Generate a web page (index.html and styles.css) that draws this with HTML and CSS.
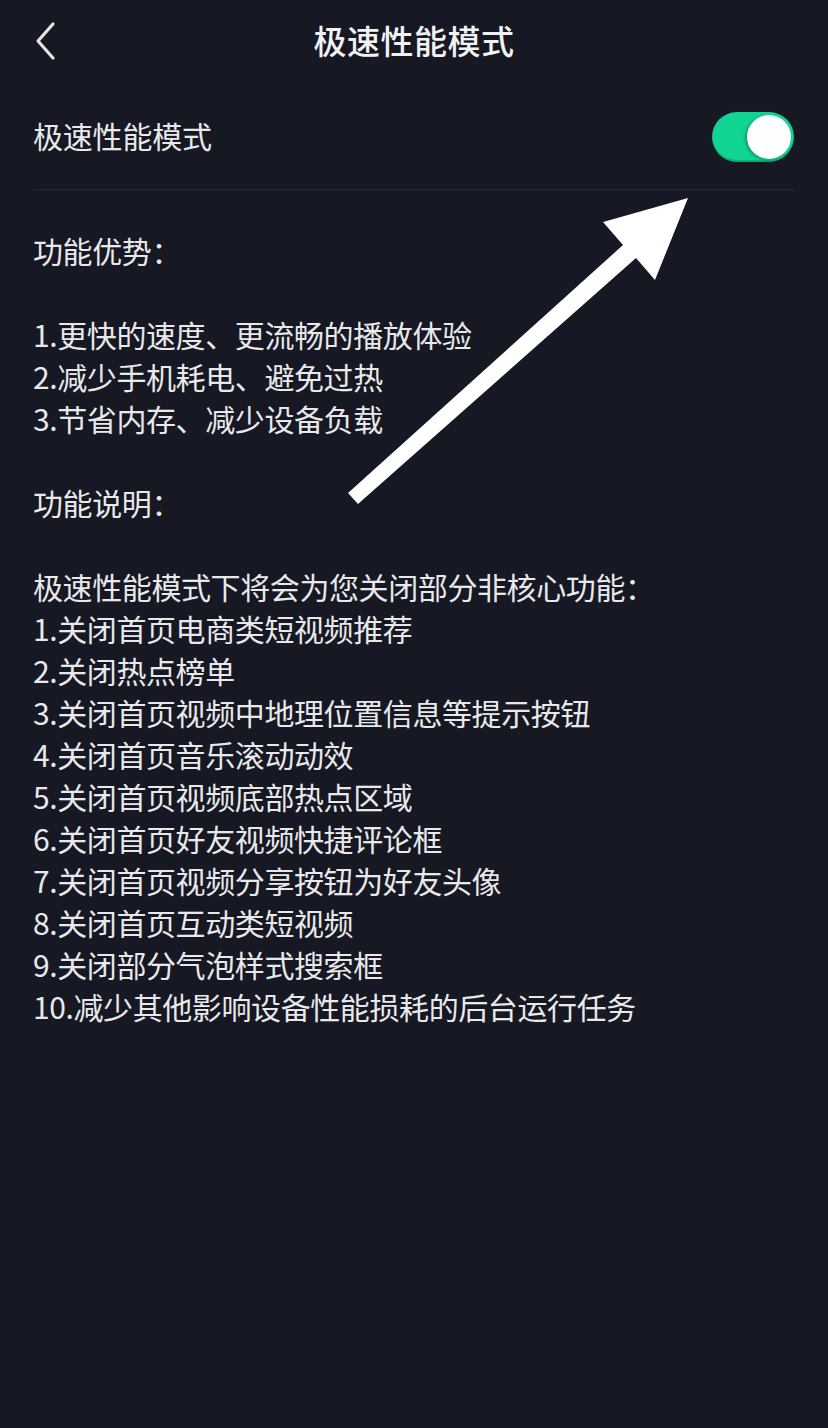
FILE: index.html
```html
<!DOCTYPE html>
<html lang="zh-CN">
<head>
<meta charset="utf-8">
<title>极速性能模式</title>
<link rel="stylesheet" href="styles.css">
</head>
<body>
<div class="page">
  <header class="nav">
    <svg class="back" width="24" height="40" viewBox="0 0 24 40">
      <path d="M19 3 L4 20 L19 37" fill="none" stroke="#e4e4e6" stroke-width="3.2" stroke-linecap="round" stroke-linejoin="round"/>
    </svg>
    <h1 class="title">极速性能模式</h1>
  </header>

  <div class="setting">
    <span class="setting-label">极速性能模式</span>
    <div class="toggle"><div class="knob"></div></div>
  </div>

  <div class="content">
    <p>功能优势：</p>
    <p class="blank">&nbsp;</p>
    <p>1.更快的速度、更流畅的播放体验</p>
    <p>2.减少手机耗电、避免过热</p>
    <p>3.节省内存、减少设备负载</p>
    <p class="blank">&nbsp;</p>
    <p>功能说明：</p>
    <p class="blank">&nbsp;</p>
    <p>极速性能模式下将会为您关闭部分非核心功能：</p>
    <p>1.关闭首页电商类短视频推荐</p>
    <p>2.关闭热点榜单</p>
    <p>3.关闭首页视频中地理位置信息等提示按钮</p>
    <p>4.关闭首页音乐滚动动效</p>
    <p>5.关闭首页视频底部热点区域</p>
    <p>6.关闭首页好友视频快捷评论框</p>
    <p>7.关闭首页视频分享按钮为好友头像</p>
    <p>8.关闭首页互动类短视频</p>
    <p>9.关闭部分气泡样式搜索框</p>
    <p>10.减少其他影响设备性能损耗的后台运行任务</p>
  </div>

  <svg class="arrow" width="828" height="1428" viewBox="0 0 828 1428">
    <polygon points="688,198 603,222 623,245 348,493 358,504 636,258 655,280" fill="#ffffff"/>
  </svg>
</div>
</body>
</html>
```

FILE: styles.css
```css
html, body {
  margin: 0;
  padding: 0;
  background: #161823;
}
body {
  font-family: "Noto Sans CJK SC", "Noto Sans", sans-serif;
  color: #e9e9eb;
}
.page {
  position: relative;
  width: 828px;
  height: 1428px;
  overflow: hidden;
}
.nav {
  position: relative;
  height: 84px;
  display: flex;
  align-items: center;
  justify-content: center;
}
.back {
  position: absolute;
  left: 34px;
  top: 21px;
}
.title {
  margin: 0 0 4px;
  font-size: 33px;
  font-weight: 500;
  color: #f2f2f4;
  letter-spacing: 0.5px;
}
.setting {
  margin: 0 33px;
  height: 105px;
  display: flex;
  align-items: center;
  justify-content: space-between;
  border-bottom: 1px solid #262834;
}
.setting-label {
  font-size: 30px;
  padding-bottom: 4px;
  letter-spacing: -0.2px;
}
.toggle {
  width: 82px;
  height: 50px;
  border-radius: 25px;
  background: #10d491;
  box-shadow: inset 0 -2px 0 rgba(0,0,0,0.18);
  display: flex;
  align-items: center;
  justify-content: flex-end;
  padding: 0 3px;
  box-sizing: border-box;
  margin-right: 1px;
}
.knob {
  width: 44px;
  height: 44px;
  border-radius: 50%;
  background: #ffffff;
  box-shadow: -2px 1px 3px rgba(0,0,0,0.25);
}
.content {
  padding: 39px 33px 0;
}
.content p {
  margin: 0;
  font-size: 30px;
  line-height: 42px;
  letter-spacing: -0.4px;
  white-space: nowrap;
}
.arrow {
  position: absolute;
  left: 0;
  top: 0;
  pointer-events: none;
}
```
